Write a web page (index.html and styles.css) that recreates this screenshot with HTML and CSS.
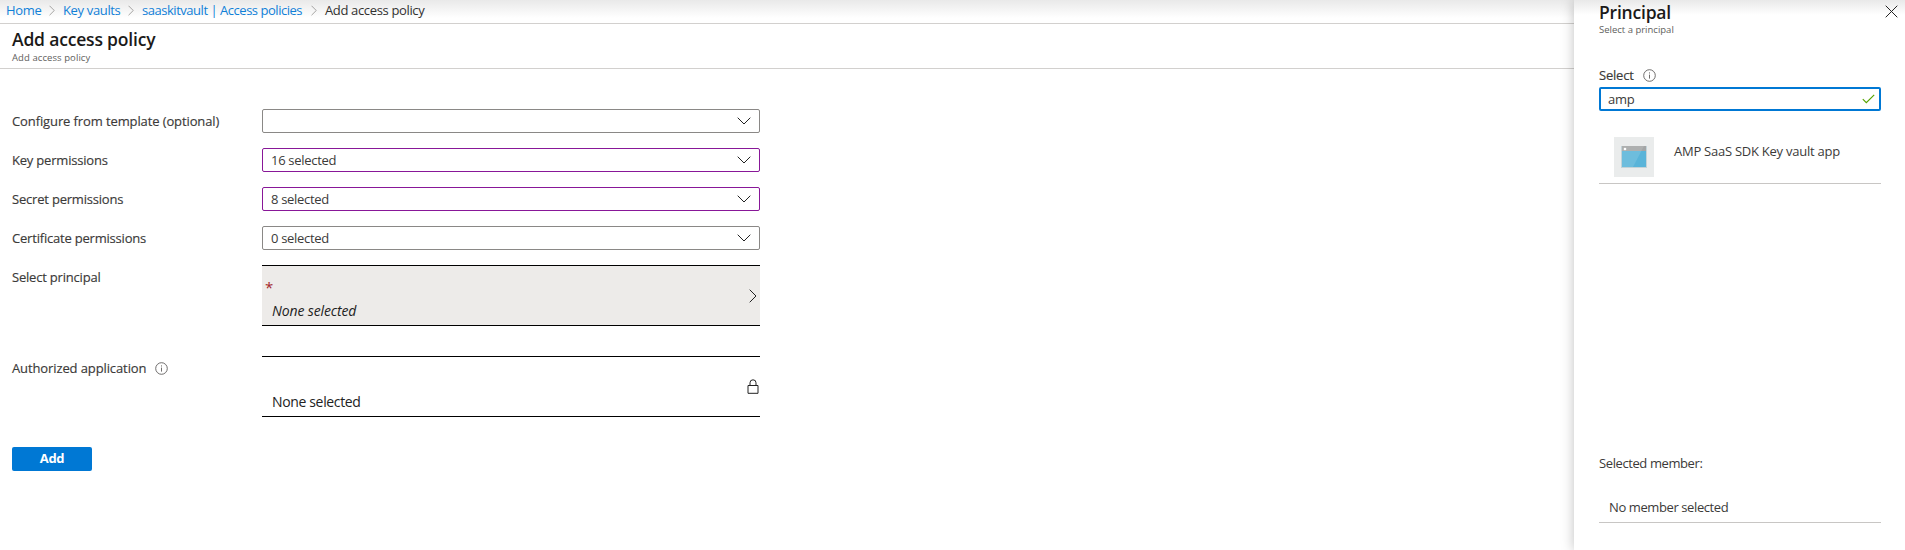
FILE: index.html
```html
<!DOCTYPE html>
<html lang="en">
<head>
<meta charset="utf-8">
<title>Add access policy</title>
<link rel="stylesheet" href="styles.css">
</head>
<body>
<svg class="defs" width="0" height="0" aria-hidden="true">
  <symbol id="down" viewBox="0 0 14 8"><path d="M.7 .7 7 7 13.3 .7"/></symbol>
  <symbol id="right" viewBox="0 0 8 14"><path d="M.7 .7 7 7 .7 13.3"/></symbol>
  <symbol id="info" viewBox="0 0 13 13"><circle cx="6.5" cy="6.5" r="5.8"/><path d="M6.5 5.6v4M6.5 3.4v1.1"/></symbol>
</svg>
<div class="app">
  <main class="main">
    <nav class="crumbs">
      <a class="c-home">Home</a><svg class="sep"><use href="#right"/></svg>
      <a class="c-vaults">Key vaults</a><svg class="sep"><use href="#right"/></svg>
      <a class="c-policies">saaskitvault | Access policies</a><svg class="sep"><use href="#right"/></svg>
      <span class="c-current">Add access policy</span>
    </nav>
    <header class="head">
      <h1 class="title">Add access policy</h1>
      <p class="subtitle">Add access policy</p>
    </header>
    <form class="form">
      <div class="row"><label class="label l-template">Configure from template (optional)</label><div class="select"><span></span><svg class="down"><use href="#down"/></svg></div></div>
      <div class="row"><label class="label">Key permissions</label><div class="select changed"><span>16 selected</span><svg class="down"><use href="#down"/></svg></div></div>
      <div class="row"><label class="label">Secret permissions</label><div class="select changed"><span>8 selected</span><svg class="down"><use href="#down"/></svg></div></div>
      <div class="row"><label class="label">Certificate permissions</label><div class="select"><span>0 selected</span><svg class="down"><use href="#down"/></svg></div></div>
      <div class="row tall"><label class="label">Select principal</label>
        <div class="picker active"><div class="picker-text"><span class="star">*</span><em class="none">None selected</em></div><svg class="right"><use href="#right"/></svg></div></div>
      <div class="row tall"><label class="label l-app">Authorized application <svg class="info"><use href="#info"/></svg></label>
        <div class="picker"><div class="picker-text"><span class="star"></span><span class="none">None selected</span></div><svg class="lock" viewBox="0 0 12 15"><path d="M1 6.5h10v7.8H1zM3 6.5V3.8a3 3 0 0 1 6 0v2.7"/></svg></div></div>
      <button type="button" class="add">Add</button>
    </form>
  </main>
  <aside class="panel">
    <div class="panel-head">
      <div><h2 class="title">Principal</h2><p class="subtitle">Select a principal</p></div>
      <svg class="close" viewBox="0 0 13 13"><path d="M.7 .7 12.3 12.3M12.3 .7 .7 12.3"/></svg>
    </div>
    <label class="label search-label">Select <svg class="info"><use href="#info"/></svg></label>
    <div class="search"><span>amp</span><svg class="check" viewBox="0 0 13 10"><path d="M.8 5.2 4.3 8.7 12.2 .8"/></svg></div>
    <div class="result">
      <div class="tile"><svg width="26" height="22" viewBox="0 0 26 22"><path fill="#c3d3d8" d="M0 0h26v22H0z"/><path fill="#a3a5a6" d="M1 0h24v5H1z"/><path fill="#59b4d9" d="M1 5h24v16H1z"/><path fill="#fff" opacity=".12" d="M1 0h22L12 21H1z"/><circle fill="#fff" cx="4" cy="3" r="1.3"/></svg></div>
      <span class="result-name">AMP SaaS SDK Key vault app</span>
    </div>
    <div class="members">
      <p class="members-title">Selected member:</p>
      <div class="member">No member selected</div>
    </div>
  </aside>
</div>
</body>
</html>
```

FILE: styles.css
```css
* { box-sizing: border-box; }
body { margin: 0; font: 13px/18px "Open Sans", "Noto Sans", sans-serif; color: #3b3a39; background: #fff; overflow: hidden; }
h1, h2, p { margin: 0; }
svg { display: block; flex: none; fill: none; stroke: #222; }
.defs { position: absolute; }
.app { display: flex; height: 550px; background: linear-gradient(#e9e9e9, #fff 18px); }
.main { flex: 1; min-width: 0; }

.crumbs { display: flex; height: 24px; padding: 1px 0 4px 6px; align-items: center; border-bottom: 1px solid #d2d0ce; letter-spacing: -.35px; white-space: nowrap; }
.crumbs a { color: #1080d8; }
.c-home { width: 36px; }
.c-vaults { width: 58px; }
.c-policies { width: 162px; letter-spacing: -.47px; }
.sep { width: 6px; height: 11px; margin: 0 8px 0 7px; stroke: #8a8886; }
.crumbs .c-current { color: #323130; }

.head { height: 45px; padding: 3px 12px 0; border-bottom: 1px solid #d2d0ce; }
.head .subtitle { margin-top: 1px; }
.title { font-size: 17.5px; line-height: 24px; font-weight: 600; color: #1b1a19; letter-spacing: -.18px; }
.subtitle { font-size: 9.5px; line-height: 12px; color: #605e5c; letter-spacing: .08px; }

.form { display: flex; flex-direction: column; padding: 40px 0 0 12px; }
.row { display: flex; height: 24px; margin-bottom: 15px; }
.label { display: flex; align-items: center; width: 250px; height: 24px; font-weight: 500; letter-spacing: -.2px; -webkit-text-stroke: .15px; white-space: nowrap; }
.l-template, .l-app { letter-spacing: -.11px; }
.select { display: flex; align-items: center; justify-content: space-between; width: 498px; padding: 0 8px; border: 1px solid #8a8886; border-radius: 2px; letter-spacing: -.3px; background: #fff; }
.changed { border-color: #881798; }
.down { width: 14px; height: 8px; }
.tall { height: 61px; margin-bottom: 30px; }
.picker { display: flex; justify-content: space-between; align-items: center; width: 498px; border: solid #000; border-width: 1px 0; }
.active { background: #edebe9; }
.picker-text { display: flex; flex-direction: column; padding-top: 9px; }
.star { height: 22px; padding-left: 3px; color: #a4262c; font-size: 15px; line-height: 20px; }
.none { padding-left: 10px; font-size: 14px; line-height: 24px; color: #222; letter-spacing: -.35px; }
em.none { letter-spacing: -.13px; }
.right { width: 8px; height: 14px; margin-right: 3px; }
.lock { width: 12px; height: 15px; margin-right: 1px; }
.info { width: 13px; height: 13px; margin-left: 9px; stroke: #605e5c; stroke-width: .9; }
.add { width: 80px; height: 24px; padding: 0 0 2px; border: 0; border-radius: 2px; background: #0078d4; color: #fff; font: 700 13px/18px "Open Sans", sans-serif; letter-spacing: -.3px; }

.panel { display: flex; flex-direction: column; width: 331px; padding: 0 24px 27px 25px; background: linear-gradient(#e9e9e9, #fff 15px); box-shadow: 0 0 12px rgba(0, 0, 0, .25); }
.panel-head { display: flex; justify-content: space-between; height: 63px; }
.panel-head .title { letter-spacing: -.2px; }
.panel-head .subtitle { letter-spacing: 0; }
.close { width: 13px; height: 13px; margin: 5px -16.5px 0 0; }
.search-label { width: auto; height: 24px; }
.search { display: flex; justify-content: space-between; align-items: center; height: 24px; padding: 0 4px 0 7px; border: 2px solid #0078d4; border-radius: 2px; background: #fff; letter-spacing: -.3px; }
.check { width: 13px; height: 10px; stroke: #57a300; stroke-width: 1.2; }
.result { display: flex; height: 73px; padding: 26px 15px 0; border-bottom: 1px solid #c8c6c4; }
.tile { display: flex; align-items: center; justify-content: center; width: 40px; height: 40px; background: #eaecec; }
.tile svg { stroke: none; }
.result-name { margin: 5px 0 0 20px; letter-spacing: -.25px; white-space: nowrap; }
.members { margin-top: auto; letter-spacing: -.4px; }
.member { height: 50px; padding: 25px 10px 0; border-bottom: 1px solid #c8c6c4; }
.members-title { height: 19px; }
```
